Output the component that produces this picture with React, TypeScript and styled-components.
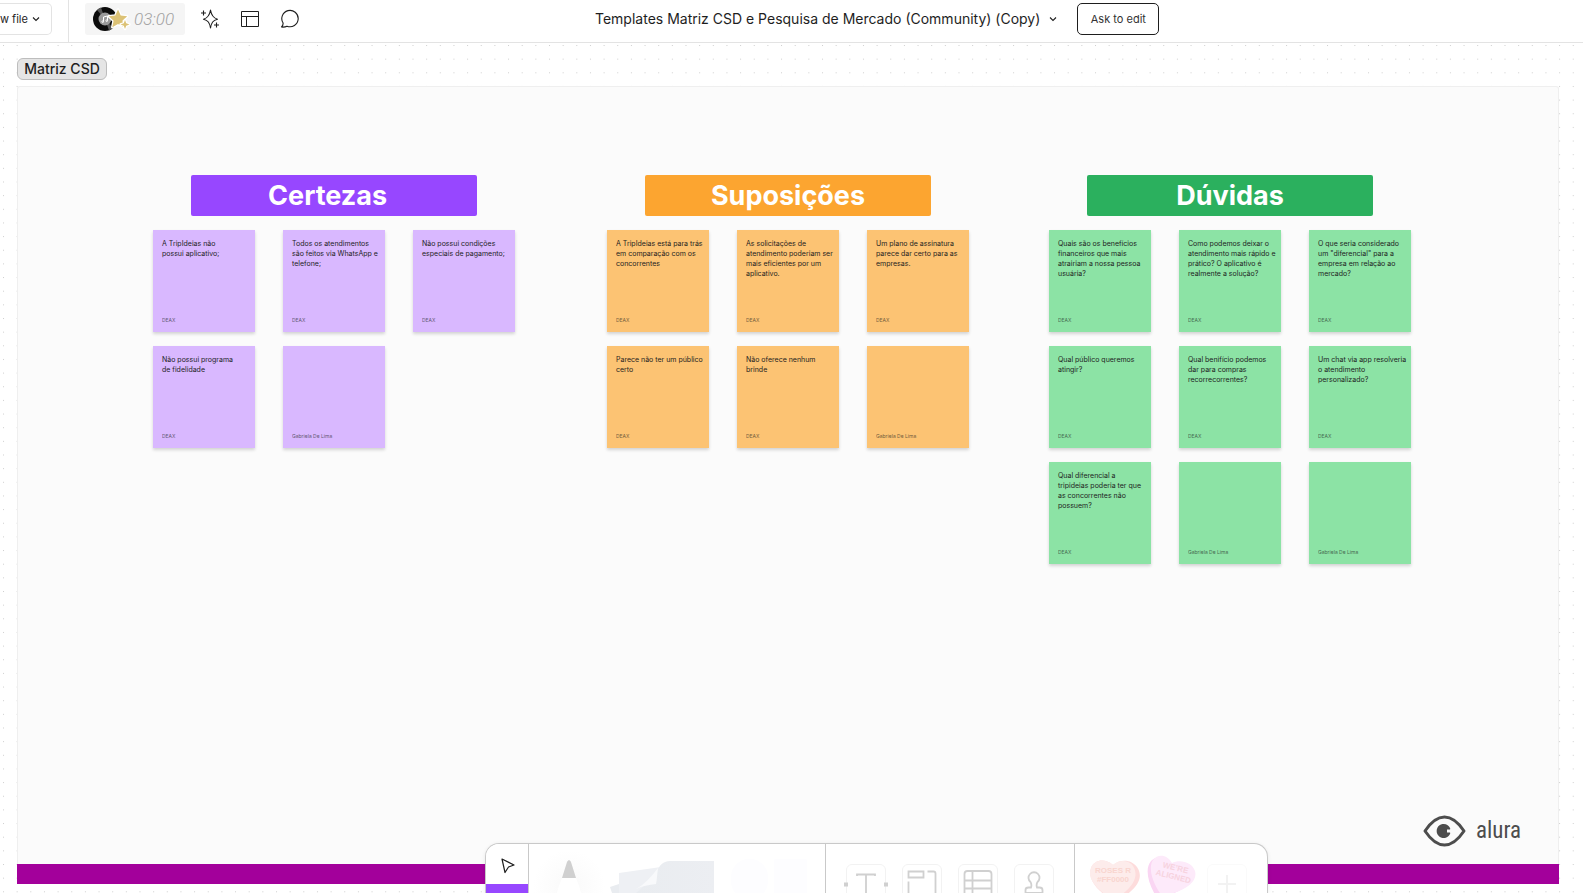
import React from "react";
import styled, { createGlobalStyle } from "styled-components";

const GlobalStyle = createGlobalStyle`
  * { box-sizing: border-box; }
  body {
    margin: 0;
    background: #fff;
    font-family: Inter, "Liberation Sans", sans-serif;
    color: #1e1e1e;
  }
  button { font-family: inherit; color: inherit; cursor: pointer; }
  h1, h2, p { margin: 0; }
`;

const Page = styled.div`
  position: relative;
  display: flex;
  flex-direction: column;
  height: 100vh;
  min-width: 1280px;
  overflow: hidden;
`;

const Header = styled.header`
  display: grid;
  grid-template-columns: 595px auto 1fr;
  flex: none;
  height: 43px;
  background: #fff;
  border-bottom: 1px solid #e3e3e3;
`;

const Tools = styled.div`
  display: flex;
  align-items: flex-start;
`;

const FileArea = styled.div`
  width: 69px;
  height: 42px;
  padding-top: 3px;
  border-right: 1px solid #e3e3e3;
`;

const FileButton = styled.button`
  display: flex;
  align-items: center;
  justify-content: space-between;
  width: 52px;
  height: 32px;
  padding: 0 11px 0 0;
  background: #fff;
  border: 1px solid #e3e3e3;
  border-left: 0;
  border-radius: 0 5px 5px 0;
  font-size: 11px;
  font-weight: 400;
  white-space: nowrap;
`;

const TimerButton = styled.button`
  display: flex;
  align-items: center;
  gap: 2px;
  width: 100px;
  height: 32px;
  margin: 3px 5px 0 16px;
  padding: 0 0 0 7px;
  background: #f5f5f5;
  border: 0;
  border-radius: 3px;
`;

const TimerText = styled.span`
  color: #a3a3a3;
  font-family: Roboto, "Liberation Sans", sans-serif;
  font-size: 17px;
  font-style: italic;
  font-weight: 300;
  line-height: 20px;
`;

const IconButton = styled.button`
  display: flex;
  align-items: center;
  justify-content: center;
  width: 40px;
  height: 38px;
  padding: 0;
  background: none;
  border: 0;
`;

const Title = styled.div`
  display: flex;
  align-items: center;
  height: 38px;
  white-space: nowrap;
`;

const FileName = styled.h1`
  font-size: 14px;
  font-weight: 400;
  line-height: 20px;
`;

const MenuButton = styled(IconButton)`
  width: 26px;
`;

const AskButton = styled.button`
  width: 82px;
  height: 32px;
  margin-left: 11px;
  padding: 0;
  background: #fff;
  border: 1px solid #1e1e1e;
  border-radius: 5px;
  color: #333;
  font-size: 11px;
`;

const Canvas = styled.main`
  position: relative;
  display: flex;
  flex: 1;
  flex-direction: column;
  align-items: stretch;
  padding: 15px 24px 9px 17px;
`;

const Dots = styled.svg`
  position: absolute;
  inset: 0;
  width: 100%;
  height: 100%;
`;

const FrameLabel = styled.h2`
  position: relative;
  align-self: flex-start;
  width: 90px;
  height: 22px;
  margin-bottom: 6px;
  background: #e5e5e5;
  border: 1px solid #bdbdbd;
  border-radius: 6px;
  font-size: 14px;
  font-weight: 500;
  line-height: 20px;
  text-align: center;
  white-space: nowrap;
`;

const Frame = styled.section`
  position: relative;
  display: flex;
  flex: 1;
  flex-direction: column;
  justify-content: space-between;
  background: #fbfbfb;
  box-shadow: inset 0 0 0 1px #efefef;
  border-radius: 3px 3px 0 0;
`;

const FrameFooter = styled.div`
  height: 20px;
  background: #a3009b;
`;

const Board = styled.div`
  display: grid;
  flex: 1;
  grid-template-columns: 375fr 363fr 363fr;
  column-gap: 79px;
  align-content: start;
  padding: 89px 147px 0 136px;
`;

const Group = styled.section`
  display: flex;
  flex-direction: column;
  align-items: center;
  gap: 14px;
  width: 362px;
`;

const GroupTitle = styled.h2<{ $color: string }>`
  width: 286px;
  height: 41px;
  background: ${(p) => p.$color};
  border-radius: 2px;
  color: #fff;
  font-size: 27px;
  font-weight: 700;
  line-height: 42px;
  text-align: center;
  white-space: pre;
`;

const Notes = styled.div`
  display: grid;
  grid-template-columns: repeat(3, 102px);
  gap: 14px 28px;
`;

const Note = styled.article<{ $color: string }>`
  display: flex;
  flex-direction: column;
  justify-content: space-between;
  height: 102px;
  padding: 9px 5px 9px 9px;
  background: ${(p) => p.$color};
  box-shadow: 0 2px 3px rgba(0, 0, 0, 0.16);
`;

const NoteText = styled.p`
  min-height: 10px;
  font-size: 7px;
  line-height: 10px;
  white-space: pre;
`;

const Author = styled.p`
  font-size: 5px;
  line-height: 6px;
  opacity: 0.65;
`;

const Brand = styled.div`
  display: flex;
  align-items: center;
  align-self: flex-end;
  gap: 10px;
  margin: 0 38px 16px 0;
  color: #4d4d4d;
  font-family: "Liberation Sans Narrow", "Roboto Condensed", Roboto, sans-serif;
  font-size: 23px;
  line-height: 34px;
`;

const Toolbar = styled.nav`
  position: absolute;
  bottom: 0;
  left: calc(50% - 307px);
  display: flex;
  width: 783px;
  height: 50px;
  background: #fff;
  border: 1px solid #c9c9c9;
  border-bottom: 0;
  border-radius: 14px 14px 0 0;
  box-shadow: 0 1px 4px rgba(0, 0, 0, 0.08);
  overflow: hidden;
`;

const Section = styled.div<{ $width: number }>`
  display: flex;
  flex: none;
  width: ${(p) => p.$width}px;
  border-right: 1px solid #c9c9c9;

  &:last-child { border-right: 0; }
`;

const PointerSection = styled(Section)`
  flex-direction: column;
`;

const PointerButton = styled.button`
  flex: 1;
  padding: 6px 0 0 2px;
  background: #fff;
  border: 0;
`;

const ActiveMark = styled.div`
  height: 9px;
  background: #9747ff;
`;

const DrawingButton = styled.button`
  padding: 0;
  background: none;
  border: 0;
`;

const ToolTiles = styled(Section)`
  gap: 16px;
  padding: 20px 0 0 20px;
`;

const Tile = styled.button`
  flex: none;
  width: 40px;
  height: 40px;
  padding: 0;
  background: #fff;
  border: 1px solid #f2f2f2;
  border-radius: 6px;

  svg { display: block; overflow: visible; }
`;

const Stickers = styled(Section)`
  align-items: flex-start;
`;

const AddTile = styled(Tile)`
  margin: 20px 0 0 2px;
  border-color: #fafafa;
`;

type NoteData = { lines: string[]; author?: string };
type GroupData = { title: string; color: string; paper: string; notes: NoteData[] };

const GUEST = "Gabriela De Lima";

const groups: GroupData[] = [
  {
    title: "Certezas  ",
    color: "#9747ff",
    paper: "#d9b8ff",
    notes: [
      { lines: ["A TripIdeias não", "possui aplicativo;"] },
      { lines: ["Todos os atendimentos", "são feitos via WhatsApp e", "telefone;"] },
      { lines: ["Não possui condições", "especiais de pagamento;"] },
      { lines: ["Não possui programa", "de fidelidade"] },
      { lines: [], author: GUEST },
    ],
  },
  {
    title: "Suposições",
    color: "#fca530",
    paper: "#fcc373",
    notes: [
      { lines: ["A TripIdeias está para trás", "em comparação com os", "concorrentes"] },
      { lines: ["As solicitações de", "atendimento poderiam ser", "mais eficientes por um", "aplicativo."] },
      { lines: ["Um plano de assinatura", "parece dar certo para as", "empresas."] },
      { lines: ["Parece não ter um público", "certo"] },
      { lines: ["Não oferece nenhum", "brinde"] },
      { lines: [], author: GUEST },
    ],
  },
  {
    title: "Dúvidas",
    color: "#2bb05e",
    paper: "#8ce3a5",
    notes: [
      { lines: ["Quais são os benefícios", "financeiros que mais", "atrairiam a nossa pessoa", "usuária?"] },
      { lines: ["Como podemos deixar o", "atendimento mais rápido e", "prático? O aplicativo é", "realmente a solução?"] },
      { lines: ["O que seria considerado", "um \"diferencial\" para a", "empresa em relação ao", "mercado?"] },
      { lines: ["Qual público queremos", "atingir?"] },
      { lines: ["Qual benifício podemos", "dar para compras", "recorrecorrentes?"] },
      { lines: ["Um chat via app resolveria", "o atendimento", "personalizado?"] },
      { lines: ["Qual diferencial a", "tripideias poderia ter que", "as concorrentes não", "possuem?"] },
      { lines: [], author: GUEST },
      { lines: [], author: GUEST },
    ],
  },
];

const Chevron = () => (
  <svg width="8" height="8" viewBox="0 0 8 8" fill="none" stroke="#1e1e1e" strokeWidth="1.1">
    <path d="M1 2.5 4 5.5 7 2.5" />
  </svg>
);

const Record = () => (
  <svg width="40" height="30" viewBox="0 0 40 30">
    <circle cx="13" cy="15" r="12" fill="#0b0b0b" />
    <path d="M13 15 5 6a12 12 0 0 1 4-2.400zM13 15l8 9a12 12 0 0 1-4 2.400z" fill="#555" />
    <circle cx="13" cy="15" r="6.500" fill="#9a9a9a" />
    <g fill="none" stroke="#fff" strokeWidth="1">
      <path d="M11.500 17.500v-4.500l4-1v4.500" />
      <circle cx="10.700" cy="17.700" r=".8" />
      <circle cx="14.700" cy="16.700" r=".8" />
    </g>
    <path
      d="m26 5.500 2.700 6 6.500.700-4.800 4.500 1.300 6.500-5.700-3.300-5.700 3.300 1.300-6.500-4.800-4.500 6.500-.700z"
      fill="#dcc276" stroke="#fff" strokeWidth="2.600" strokeLinejoin="round" paintOrder="stroke"
    />
    <path
      d="m33 16 1.200 3.300 3.300 1.200-3.300 1.200L33 25l-1.200-3.300-3.300-1.200 3.300-1.200z"
      fill="#dcc276" stroke="#fff" strokeWidth="2.400" strokeLinejoin="round" paintOrder="stroke"
    />
  </svg>
);

const Sparkle = () => (
  <svg width="20" height="20" viewBox="0 0 20 20" fill="none" stroke="#1e1e1e" strokeWidth="1.100" strokeLinejoin="round">
    <path d="M10.500 1c.9 5.500 2.500 8 7 9.200-4.500 1.200-6.100 3.300-7 8.800-.9-5.500-2.500-7.600-7-8.800 4.500-1.200 6.100-3.700 7-9.200z" />
    <path d="M3.500 1.500v5M1 4h5M16.500 13.500v5M14 16h5" />
  </svg>
);

const LayoutIcon = () => (
  <svg width="20" height="18" viewBox="0 0 20 18" fill="none" stroke="#1e1e1e">
    <path d="M1.500 1.500h17v15h-17zM1.500 6.500h17M6.500 6.500v10" />
  </svg>
);

const CommentIcon = () => (
  <svg width="20" height="20" viewBox="0 0 20 20" fill="none" stroke="#1e1e1e" strokeWidth="1.100" strokeLinejoin="round">
    <path d="M1.500 18c1.300-1.200 1.700-2.400 1.600-4A8.200 8.200 0 1 1 7 17.200C5.500 18 3.500 18.200 1.500 18z" />
  </svg>
);

const Eye = () => (
  <svg width="43" height="34" viewBox="0 0 43 34">
    <path
      d="M2 17C8 8 14 3 21.500 3S35 8 41 17C35 26 29 31 21.500 31S8 26 2 17z"
      fill="none" stroke="#4d4d4d" strokeWidth="3" strokeLinejoin="round"
    />
    <path d="M27.300 14.800A7 7 0 1 0 27.300 19.200L27 18.500h-3v-3h3z" fill="#4d4d4d" />
  </svg>
);

const DrawTools = () => (
  <svg width="296" height="49" viewBox="0 0 296 49">
    <defs>
      <radialGradient id="halo">
        <stop offset="0" stopColor="#ececec" />
        <stop offset="1" stopColor="#fff" />
      </radialGradient>
      <linearGradient id="sheet" x1="0" x2="1">
        <stop offset="0" stopColor="#e9ecf0" />
        <stop offset="1" stopColor="#eceef2" />
      </linearGradient>
    </defs>
    <circle cx="40" cy="42" r="36" fill="url(#halo)" opacity=".3" />
    <path d="M28 49c1-5 3-10 5-15h14c2 5 4 10 5 15z" fill="#fff" />
    <path d="M38 18c1-2.500 3-2.500 4 0l5 16H33z" fill="#d0d0d0" />
    <path d="m81 43 9-3v9h-7z" fill="#e9ecf0" />
    <path d="m90 29 42-6v26H90z" fill="#eef0f4" />
    <path d="M128 30c1-8 6-13 13-13h44v32h-78z" fill="url(#sheet)" />
    <path d="M107 45c9-5 15-12 22-21-1 6-1 12-2 16-7 1-14 2-20 5z" fill="#f8f9fb" />
    <rect x="202" y="15" width="37" height="40" rx="18" fill="#fdfdff" />
    <rect x="245" y="15" width="33" height="40" rx="2" fill="#fdfdff" />
  </svg>
);

const toolDrawings = [
  {
    name: "Text",
    art: (
      <>
        <path d="M10 11v-1.500h18V11M19 9.500V40" />
        <path d="M-3 17.500h4v4h-4zM37 17.500h4v4h-4z" fill="#d0d0d0" stroke="none" />
      </>
    ),
  },
  {
    name: "Section",
    art: <path d="M5.500 6.500h15v6h-15zM24.500 6.500h6q2 0 2 2V40M5.500 16.500V40" />,
  },
  {
    name: "Table",
    art: <path d="M5.500 40V9q0-3 3-3h21q3 0 3 3v31M5.500 15.500h27M5.500 23.500h27M13.500 6v34" />,
  },
  {
    name: "Stamp",
    art: (
      <path d="M10.500 28v-3q0-2.500 3-2.500h2.500q1-3-.5-5.500a5.500 5.500 0 1 1 7 0q-1.500 2.500-.5 5.500H24.500q3 0 3 2.500v3z" />
    ),
  },
];

const Hearts = () => (
  <svg width="130" height="49" viewBox="0 0 130 49">
    <g fontFamily="Liberation Sans, sans-serif" fontSize="8" fontWeight="700" textAnchor="middle">
      <path d="M41 58C19 46 13 34 16 24c3-9 15-10 22-3 7-6 18-6 24 2 6 9 4 20-21 35z" fill="#fddcdc" />
      <path d="M38 56C19 44 12 33 16 24c3-9 15-10 22-3 6-6 16-5 20 1 6 9 2 22-20 34z" fill="#fdeceb" />
      <text x="38" y="29" fill="#f9d5cf">ROSES R</text>
      <text x="38" y="38" fill="#f9d5cf">#FF0000</text>
      <path d="M82 54C72 38 70 24 76 17c5-6 15-5 19 3 8-4 20-1 22 8 3 11-10 21-35 26z" fill="#fad6f3" />
      <path d="M87 52C77 38 73 24 78 16c5-7 15-5 19 3 8-4 20-1 23 8 3 11-9 20-33 25z" fill="#fdeafa" />
      <g transform="rotate(14 98 30)" fill="#f7d3df">
        <text x="99" y="26">WE’RE</text>
        <text x="99" y="35">ALIGNED</text>
      </g>
    </g>
  </svg>
);

export default function App() {
  return (
    <Page>
      <GlobalStyle />
      <Header>
        <Tools>
          <FileArea>
            <FileButton>w file<Chevron /></FileButton>
          </FileArea>
          <TimerButton aria-label="Timer and music">
            <Record />
            <TimerText>03:00</TimerText>
          </TimerButton>
          <IconButton aria-label="Generate"><Sparkle /></IconButton>
          <IconButton aria-label="Templates"><LayoutIcon /></IconButton>
          <IconButton aria-label="Comments"><CommentIcon /></IconButton>
        </Tools>
        <Title>
          <FileName>Templates Matriz CSD e Pesquisa de Mercado (Community) (Copy)</FileName>
          <MenuButton aria-label="File menu"><Chevron /></MenuButton>
          <AskButton>Ask to edit</AskButton>
        </Title>
      </Header>

      <Canvas>
        <Dots aria-hidden="true">
          <defs>
            <pattern id="dots" x="3" y="2" width="13.650" height="13.650" patternUnits="userSpaceOnUse">
              <rect width="1" height="1" fill="#cfcfcf" />
            </pattern>
          </defs>
          <rect width="100%" height="100%" fill="url(#dots)" />
        </Dots>
        <FrameLabel>Matriz CSD</FrameLabel>
        <Frame>
          <Board>
            {groups.map((group) => (
              <Group key={group.title}>
                <GroupTitle $color={group.color}>{group.title}</GroupTitle>
                <Notes>
                  {group.notes.map((note, i) => (
                    <Note key={i} $color={group.paper}>
                      <NoteText>{note.lines.join("\n")}</NoteText>
                      <Author>{note.author ?? "DEAX"}</Author>
                    </Note>
                  ))}
                </Notes>
              </Group>
            ))}
          </Board>
          <Brand><Eye />alura</Brand>
          <FrameFooter />
        </Frame>
      </Canvas>

      <Toolbar>
        <PointerSection $width={43}>
          <PointerButton aria-label="Select">
            <svg width="16" height="18" viewBox="0 0 16 18" fill="none" stroke="#1e1e1e" strokeWidth="1.200" strokeLinejoin="round">
              <path d="m2 2 12 6-5.500 2L5 15.500z" />
            </svg>
          </PointerButton>
          <ActiveMark />
        </PointerSection>
        <Section $width={297}>
          <DrawingButton aria-label="Marker, sticky notes and shapes"><DrawTools /></DrawingButton>
        </Section>
        <ToolTiles $width={249}>
          {toolDrawings.map((tool) => (
            <Tile key={tool.name} aria-label={tool.name}>
              <svg width="38" height="38" viewBox="0 0 38 38" fill="none" stroke="#d0d0d0" strokeWidth="1.800">
                {tool.art}
              </svg>
            </Tile>
          ))}
        </ToolTiles>
        <Stickers $width={192}>
          <DrawingButton aria-label="Stickers"><Hearts /></DrawingButton>
          <AddTile aria-label="More">
            <svg width="38" height="38" viewBox="0 0 38 38" fill="none" stroke="#f2f2f2" strokeWidth="2">
              <path d="M10 19h18M19 10v18" />
            </svg>
          </AddTile>
        </Stickers>
      </Toolbar>
    </Page>
  );
}
